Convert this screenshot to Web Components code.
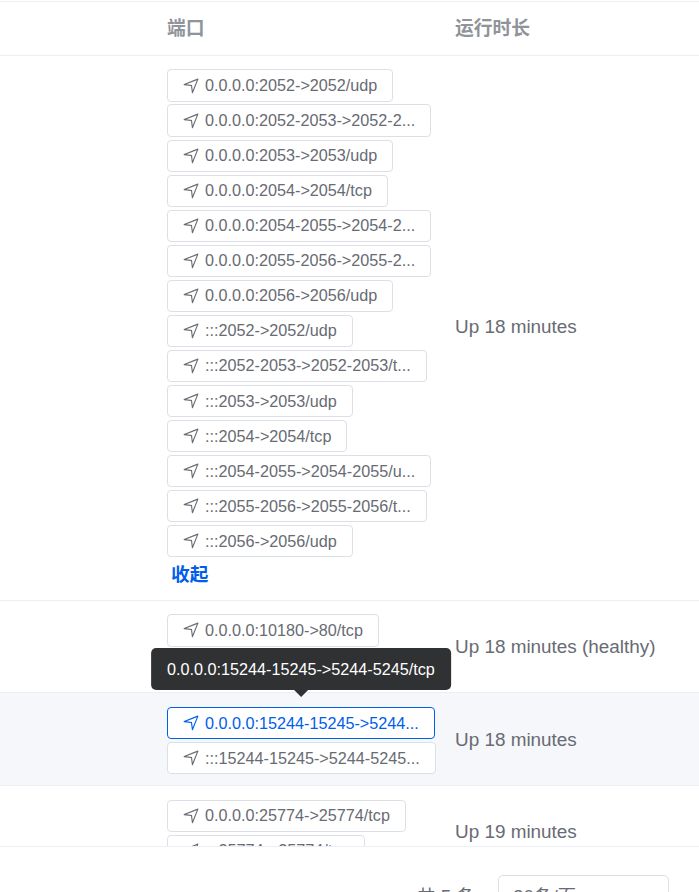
<!DOCTYPE html>
<html lang="zh">
<head>
<meta charset="utf-8">
<title>容器端口</title>
<style>
  html, body { margin: 0; padding: 0; height: 892px; overflow: hidden; background: #fff; }
  body { font-family: "Liberation Sans", "Noto Sans CJK SC", sans-serif; }
</style>
</head>
<body>
<port-table>
  <port-row uptime="Up 18 minutes" class="long">
    <port-tag port="0.0.0.0:2052->2052/udp"></port-tag>
    <port-tag port="0.0.0.0:2052-2053->2052-2053/tcp"></port-tag>
    <port-tag port="0.0.0.0:2053->2053/udp"></port-tag>
    <port-tag port="0.0.0.0:2054->2054/tcp"></port-tag>
    <port-tag port="0.0.0.0:2054-2055->2054-2055/udp"></port-tag>
    <port-tag port="0.0.0.0:2055-2056->2055-2056/tcp"></port-tag>
    <port-tag port="0.0.0.0:2056->2056/udp"></port-tag>
    <port-tag port=":::2052->2052/udp"></port-tag>
    <port-tag port=":::2052-2053->2052-2053/tcp"></port-tag>
    <port-tag port=":::2053->2053/udp"></port-tag>
    <port-tag port=":::2054->2054/tcp"></port-tag>
    <port-tag port=":::2054-2055->2054-2055/udp"></port-tag>
    <port-tag port=":::2055-2056->2055-2056/tcp"></port-tag>
    <port-tag port=":::2056->2056/udp"></port-tag>
    <a slot="more">收起</a>
  </port-row>
  <port-row uptime="Up 18 minutes (healthy)">
    <port-tag port="0.0.0.0:10180->80/tcp"></port-tag>
    <port-tag port=":::10180->80/tcp"></port-tag>
  </port-row>
  <port-row uptime="Up 18 minutes" hovered>
    <port-tag port="0.0.0.0:15244-15245->5244-5245/tcp" active></port-tag>
    <port-tag port=":::15244-15245->5244-5245/tcp"></port-tag>
  </port-row>
  <port-row uptime="Up 19 minutes">
    <port-tag port="0.0.0.0:25774->25774/tcp"></port-tag>
    <port-tag port=":::25774->25774/tcp"></port-tag>
  </port-row>
</port-table>
<table-footer total="5" size="20条/页"></table-footer>

<script>
(function () {
  'use strict';

  const COLS = 'grid-template-columns: 167px 288px 1fr;';
  const MAX_LEN = 25; // longer port strings get cut, the tooltip shows them whole

  class PortTable extends HTMLElement {
    constructor() {
      super();
      this.attachShadow({ mode: 'open' }).innerHTML = `
        <style>
          :host { display: block; height: 846px; overflow: hidden; box-sizing: border-box;
                  padding-top: 1px; color: #686b73; }
          .head { display: grid; ${COLS} height: 55px; box-sizing: border-box; line-height: 53px;
                  border-top: 1px solid #ebeef5; border-bottom: 1px solid #ebeef5;
                  color: #909399; font-size: 18.8px; font-weight: 700; }
        </style>
        <div class="head"><span></span><span>端口</span><span>运行时长</span></div>
        <slot></slot>`;
    }
  }

  class PortRow extends HTMLElement {
    constructor() {
      super();
      this.attachShadow({ mode: 'open' }).innerHTML = `
        <style>
          :host { display: grid; ${COLS} align-items: center; box-sizing: border-box;
                  border-bottom: 1px solid #ebeef5; padding: 13.8px 0 10.49px; background: #fff; }
          :host([hovered]) { background: #f5f7fa; }
          :host(.long) { height: 544.5px; padding-top: 13.45px; }
          .ports { display: flex; flex-direction: column; align-items: flex-start; gap: 2.72px; }
          :host(.long) .ports { align-self: start; }
          .uptime { font-size: 18.9px; line-height: 26px; color: #686b73; margin-bottom: 2px; }
          :host(.long) .uptime { margin-bottom: 4px; }
          ::slotted(a) { display: block; margin: 0 0 0 4px; height: 28px; line-height: 29px;
                         font-size: 18.67px; font-weight: 700; color: #005eeb; }
        </style>
        <span></span>
        <div class="ports"><slot></slot><slot name="more"></slot></div>
        <div class="uptime"></div>`;
    }
    connectedCallback() {
      this.shadowRoot.querySelector('.uptime').textContent = this.getAttribute('uptime');
    }
  }

  class PortTag extends HTMLElement {
    constructor() {
      super();
      this.attachShadow({ mode: 'open' }).innerHTML = `
        <style>
          :host { display: block; position: relative; }
          .btn { display: inline-flex; align-items: center; gap: 5px; box-sizing: border-box;
                 height: 32.33px; padding: 0 15px 0 14px; background: #fff;
                 border: 1px solid #dcdfe6; border-radius: 4px; color: #686b73;
                 font-size: 16.2px; white-space: nowrap; }
          svg { width: 18px; height: 18px; fill: currentColor; flex: none; }
          :host([active]) .btn { border-color: #005eeb; color: #005eeb; }
          .tip { display: none; position: absolute; left: 50%; bottom: calc(100% + 17px);
                 transform: translateX(-50%); z-index: 5; box-sizing: border-box; height: 42px;
                 padding: 0 16px; line-height: 42px; border-radius: 5px; background: #303133;
                 color: #fff; font-size: 16.2px; white-space: nowrap; }
          .tip::after { content: ""; position: absolute; left: 50%; top: 100%; margin-left: -7px;
                        border: 7px solid transparent; border-top-color: #303133; border-bottom: 0; }
          :host([active]) .tip { display: block; }
        </style>
        <div class="btn">
          <svg viewBox="0 0 1024 1024"><path d="m249.6 417.088 319.744 43.072 39.168 310.272L845.12 178.88 249.6 417.088zm-129.024 47.168a32 32 0 0 1-7.68-61.44l777.792-311.04a32 32 0 0 1 41.6 41.6l-310.4 776.96a32 32 0 0 1-61.44-7.68L512 516.8 120.576 464.32z"/></svg>
          <span class="label"></span>
        </div>
        <div class="tip"></div>`;
    }
    connectedCallback() {
      const port = this.getAttribute('port') || '';
      this.shadowRoot.querySelector('.label').textContent =
        port.length > MAX_LEN ? port.slice(0, MAX_LEN) + '...' : port;
      this.shadowRoot.querySelector('.tip').textContent = port;
    }
  }

  class TableFooter extends HTMLElement {
    constructor() {
      super();
      this.attachShadow({ mode: 'open' }).innerHTML = `
        <style>
          :host { display: flex; justify-content: flex-end; align-items: flex-start; gap: 23px;
                  box-sizing: border-box; height: 46px; padding: 28px 30px 0 0;
                  border-top: 1px solid #ebeef5; background: #fff; color: #686b73;
                  font-size: 18.67px; overflow: hidden; }
          .total { line-height: 43px; }
          .select { box-sizing: border-box; flex: none; width: 171px; height: 43px; padding-left: 14px;
                    border: 1px solid #dcdfe6; border-radius: 5px; line-height: 41px; }
        </style>
        <span class="total"></span>
        <div class="select"></div>`;
    }
    connectedCallback() {
      this.shadowRoot.querySelector('.total').textContent = '共 ' + this.getAttribute('total') + ' 条';
      this.shadowRoot.querySelector('.select').textContent = this.getAttribute('size');
    }
  }

  customElements.define('port-table', PortTable);
  customElements.define('port-row', PortRow);
  customElements.define('port-tag', PortTag);
  customElements.define('table-footer', TableFooter);
})();
</script>
</body>
</html>
